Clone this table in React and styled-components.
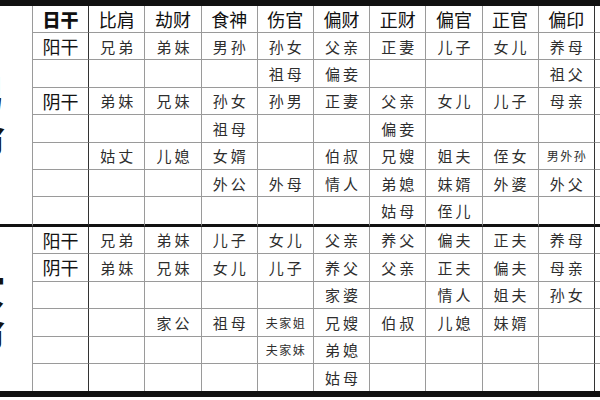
import React from 'react';
import styled, { createGlobalStyle } from 'styled-components';

const GlobalStyle = createGlobalStyle`
  html, body {
    margin: 0;
    padding: 0;
    background: #fff;
    overflow: hidden;
  }
`;

const Page = styled.div`
  width: 600px;
  height: 400px;
  overflow: hidden;
  background: #fff;
  font-family: "Noto Sans CJK SC", "Noto Sans", sans-serif;
`;

const Table = styled.table`
  margin-left: -37px;
  border-collapse: separate;
  border-spacing: 0;
  table-layout: fixed;
  width: 688px;
  border-top: 6px solid #111;
  border-bottom: 6px solid #111;
`;

const SideCell = styled.td`
  box-sizing: border-box;
  padding: 0 29px 0 0;
  text-align: right;
  vertical-align: middle;
  border-right: 1px solid #9a9a9a;
  border-bottom: ${p => (p.$divider ? '3px solid #111' : 'none')};
  font-size: 42px;
  font-weight: 900;
  line-height: 1.05;
  color: #111;
  overflow: hidden;
`;

const HeadCell = styled.th`
  box-sizing: border-box;
  height: 27px;
  padding: 0;
  text-align: center;
  vertical-align: middle;
  border-right: 1px solid ${p => (p.$dark ? '#333' : '#9a9a9a')};
  border-bottom: 1px solid #9a9a9a;
  font-size: 18px;
  font-weight: ${p => (p.$bold ? 900 : 400)};
  color: #111;
  white-space: nowrap;
`;

const Cell = styled.td`
  box-sizing: border-box;
  height: ${p => p.$h}px;
  padding: 0 0 0 ${p => (p.$label ? 0 : p.$small ? 1.5 : 3)}px;
  text-align: center;
  vertical-align: middle;
  border-right: 1px solid ${p => (p.$dark ? '#333' : '#9a9a9a')};
  border-bottom: ${p =>
    p.$divider ? '3px solid #111' : p.$last ? 'none' : '1px solid #9a9a9a'};
  color: ${p => (p.$label ? '#141414' : '#2e2e2e')};
  font-size: ${p => (p.$label ? 18 : p.$small ? 12 : 15)}px;
  letter-spacing: ${p => (p.$label ? 0 : p.$small ? 1.5 : 3)}px;
  white-space: nowrap;
`;

const small = t => ({ t, small: true });

const heads = ['日干', '比肩', '劫财', '食神', '伤官', '偏财', '正财', '偏官', '正官', '偏印', ''];

const male = [
  ['阳干', '兄弟', '弟妹', '男孙', '孙女', '父亲', '正妻', '儿子', '女儿', '养母', ''],
  ['', '', '', '', '祖母', '偏妾', '', '', '', '祖父', ''],
  ['阴干', '弟妹', '兄妹', '孙女', '孙男', '正妻', '父亲', '女儿', '儿子', '母亲', ''],
  ['', '', '', '祖母', '', '', '偏妾', '', '', '', ''],
  ['', '姑丈', '儿媳', '女婿', '', '伯叔', '兄嫂', '姐夫', '侄女', small('男外孙'), ''],
  ['', '', '', '外公', '外母', '情人', '弟媳', '妹婿', '外婆', '外父', ''],
  ['', '', '', '', '', '', '姑母', '侄儿', '', '', ''],
];

const female = [
  ['阳干', '兄弟', '弟妹', '儿子', '女儿', '父亲', '养父', '偏夫', '正夫', '养母', ''],
  ['阴干', '弟妹', '兄妹', '女儿', '儿子', '养父', '父亲', '正夫', '偏夫', '母亲', ''],
  ['', '', '', '', '', '家婆', '', '情人', '姐夫', '孙女', ''],
  ['', '', '家公', '祖母', small('夫家姐'), '兄嫂', '伯叔', '儿媳', '妹婿', '', ''],
  ['', '', '', '', small('夫家妹'), '弟媳', '', '', '', '', ''],
  ['', '', '', '', '', '姑母', '', '', '', '', ''],
];

const darkCols = [0, 9];

function BodyRow({ cells, h, divider, last }) {
  return cells.map((c, i) => {
    const text = typeof c === 'string' ? c : c.t;
    return (
      <Cell
        key={i}
        $h={h}
        $label={i === 0}
        $small={typeof c !== 'string'}
        $dark={darkCols.includes(i)}
        $divider={divider}
        $last={last}
      >
        {text}
      </Cell>
    );
  });
}

export default function App() {
  return (
    <Page>
      <GlobalStyle />
      <Table>
        <colgroup>
          <col style={{ width: 70 }} />
          {heads.map((h, i) => (
            <col key={i} style={{ width: 56.2 }} />
          ))}
        </colgroup>
        <tbody>
          <tr>
            <SideCell rowSpan={8} $divider>
              男<br />命
            </SideCell>
            {heads.map((h, i) => (
              <HeadCell key={i} $bold={i === 0} $dark={darkCols.includes(i)}>
                {h}
              </HeadCell>
            ))}
          </tr>
          {male.map((row, r) => (
            <tr key={'m' + r}>
              <BodyRow cells={row} h={r === male.length - 1 ? 29.4 : 27.4} divider={r === male.length - 1} />
            </tr>
          ))}
          {female.map((row, r) => (
            <tr key={'f' + r}>
              {r === 0 && (
                <SideCell rowSpan={female.length}>
                  女<br />命
                </SideCell>
              )}
              <BodyRow cells={row} h={r === female.length - 1 ? 26.5 : 27.5} last={r === female.length - 1} />
            </tr>
          ))}
        </tbody>
      </Table>
    </Page>
  );
}
